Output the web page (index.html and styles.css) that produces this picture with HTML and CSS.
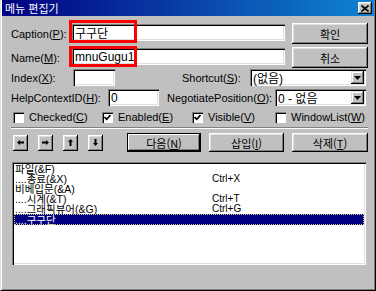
FILE: index.html
```html
<!DOCTYPE html>
<html lang="ko">
<head>
    <meta charset="UTF-8">
    <title>메뉴 편집기</title>
    <link rel="stylesheet" href="styles.css">
</head>
<body>
    <div class="window">
        <div class="titlebar">
            <span class="title">메뉴 편집기</span>
            <span class="close">
                <svg width="8" height="7" viewBox="0 0 8 7"><path d="M0.5 0.5 L7.5 6.5 M7.5 0.5 L0.5 6.5" stroke="#000" stroke-width="1.6"/></svg>
            </span>
        </div>
        <div class="body">
            <div class="row row-main">
                <span class="lbl lbl-caption">Caption(<u>P</u>):</span>
                <div class="field field-wide">
                    <span class="val">구구단</span>
                    <span class="mark mark-caption"></span>
                </div>
                <button class="btn btn-side">확인</button>
            </div>
            <div class="row row-main row-name">
                <span class="lbl lbl-caption">Name(<u>M</u>):</span>
                <div class="field field-wide">
                    <span class="val">mnuGugu1</span>
                    <span class="mark mark-name"></span>
                </div>
                <button class="btn btn-side">취소</button>
            </div>
            <div class="row row-small row-index">
                <span class="lbl lbl-index">Index(<u>X</u>):</span>
                <div class="field field-index"></div>
                <span class="lbl lbl-shortcut">Shortcut(<u>S</u>):</span>
                <div class="field combo combo-shortcut">
                    <span class="val">(없음)</span>
                    <span class="drop"><svg width="7" height="4" viewBox="0 0 7 4"><path d="M0 0 H7 L3.5 4 Z" fill="#000"/></svg></span>
                </div>
            </div>
            <div class="row row-small row-help">
                <span class="lbl lbl-help">HelpContextID(<u>H</u>):</span>
                <div class="field field-help"><span class="val">0</span></div>
                <span class="lbl lbl-neg">NegotiatePosition(<u>O</u>):</span>
                <div class="field combo combo-neg">
                    <span class="val">0 - 없음</span>
                    <span class="drop"><svg width="7" height="4" viewBox="0 0 7 4"><path d="M0 0 H7 L3.5 4 Z" fill="#000"/></svg></span>
                </div>
            </div>
            <div class="row row-checks">
                <label class="check check-1"><span class="box"></span>Checked(<u>C</u>)</label>
                <label class="check check-2"><span class="box"><svg width="7" height="7" viewBox="0 0 7 7"><path d="M0.5 3 L2.7 5.3 L6.5 1" fill="none" stroke="#000" stroke-width="1.7"/></svg></span>Enabled(<u>E</u>)</label>
                <label class="check check-3"><span class="box"><svg width="7" height="7" viewBox="0 0 7 7"><path d="M0.5 3 L2.7 5.3 L6.5 1" fill="none" stroke="#000" stroke-width="1.7"/></svg></span>Visible(<u>V</u>)</label>
                <label class="check"><span class="box"></span>WindowList(<u>W</u>)</label>
            </div>
            <div class="sep"></div>
            <div class="row row-tools">
                <div class="arrows">
                    <button class="btn arrow"><svg width="7" height="5" viewBox="0 0 7 5"><path d="M0 2.5 L3 0 V5 Z M3 1.5 H7 V3.5 H3 Z" fill="#000"/></svg></button>
                    <button class="btn arrow"><svg width="7" height="5" viewBox="0 0 7 5"><path d="M7 2.5 L4 0 V5 Z M0 1.5 H4 V3.5 H0 Z" fill="#000"/></svg></button>
                    <button class="btn arrow"><svg width="5" height="7" viewBox="0 0 5 7"><path d="M2.5 0 L0 3 H5 Z M1.5 3 H3.5 V7 H1.5 Z" fill="#000"/></svg></button>
                    <button class="btn arrow"><svg width="5" height="7" viewBox="0 0 5 7"><path d="M2.5 7 L0 4 H5 Z M1.5 0 H3.5 V4 H1.5 Z" fill="#000"/></svg></button>
                </div>
                <button class="btn btn-tool btn-default">다음(<u>N</u>)</button>
                <button class="btn btn-tool">삽입(<u>I</u>)</button>
                <button class="btn btn-tool btn-last">삭제(<u>T</u>)</button>
            </div>
            <div class="list">
                <div class="item"><span class="name">파일(&amp;F)</span></div>
                <div class="item"><span class="name">....종료(&amp;X)</span><span class="key">Ctrl+X</span></div>
                <div class="item"><span class="name">비베입문(&amp;A)</span></div>
                <div class="item"><span class="name">....시계(&amp;T)</span><span class="key">Ctrl+T</span></div>
                <div class="item"><span class="name">....그래픽뷰어(&amp;G)</span><span class="key">Ctrl+G</span></div>
                <div class="item selected"><span class="name">....구구단</span></div>
            </div>
        </div>
    </div>
</body>
</html>
```

FILE: styles.css
```css
* {
    box-sizing: border-box;
}
body {
    margin: 0;
    font-family: "Liberation Sans", "Noto Sans CJK KR", sans-serif;
    font-size: 11px;
    color: #000;
}
u {
    text-decoration: underline;
}

.window {
    width: 376px;
    height: 291px;
    background-color: #c0c0c0;
    border-left: 1px solid #dfdfdf;
    border-right: 1px solid #000;
    border-bottom: 1px solid #000;
    box-shadow: inset 1px 0 #fff, inset -1px -1px #808080;
    padding: 0 1px 1px 1px;
}

.titlebar {
    height: 16px;
    background: linear-gradient(to right, #000080, #1084d0);
    display: flex;
    align-items: center;
    justify-content: space-between;
    padding: 0 2px 0 3px;
    color: white;
}
.title {
    font-family: "Noto Sans CJK KR", sans-serif;
    font-size: 11px;
    line-height: 16px;
}
.close {
    width: 14px;
    height: 12px;
    background-color: #c0c0c0;
    box-shadow: inset -1px -1px #000, inset 1px 1px #fff, inset -2px -2px #808080, inset 2px 2px #dfdfdf;
    display: flex;
    align-items: center;
    justify-content: center;
}

.body {
    padding: 0 6px 0 9px;
}

.row {
    display: flex;
    align-items: center;
}
.row-main {
    margin-top: 7px;
    height: 21px;
    align-items: flex-start;
}
.row-name {
    margin-top: 3px;
}
.row-small {
    height: 17px;
}
.row-index {
    margin-top: 1px;
}
.row-help {
    margin-top: 3px;
}
.row-checks {
    margin-top: 3px;
    height: 16px;
}
.row-tools {
    margin-top: 4px;
    height: 19px;
}

.lbl {
    white-space: nowrap;
    flex: none;
}
.row-main .lbl {
    align-self: center;
}
.lbl-caption { width: 61px; }
.lbl-index { width: 62px; }
.lbl-shortcut { width: 68px; margin-left: 67px; }
.lbl-help { width: 97px; }
.lbl-neg { width: 108px; margin-left: 8px; }

.field {
    position: relative;
    height: 17px;
    background-color: white;
    box-shadow: inset 1px 1px #808080, inset 2px 2px #000, inset -1px -1px #fff, inset -2px -2px #dfdfdf;
    display: flex;
    align-items: center;
    padding: 0 3px;
    flex: none;
}
.val {
    font-size: 12px;
    white-space: nowrap;
}
.field-wide {
    width: 213px;
    margin-top: 1px;
    margin-right: 7px;
}
.field-index { width: 42px; }
.field-help { width: 51px; }
.combo {
    padding-right: 2px;
    justify-content: space-between;
}
.combo-shortcut { width: 116px; }
.combo-neg { width: 91px; }
.drop {
    width: 13px;
    height: 13px;
    background-color: #c0c0c0;
    box-shadow: inset -1px -1px #000, inset 1px 1px #dfdfdf, inset -2px -2px #808080, inset 2px 2px #fff;
    display: flex;
    align-items: center;
    justify-content: center;
}

/* red highlight boxes drawn over the text fields */
.mark {
    position: absolute;
    left: -3px;
    width: 68px;
    border: 3px solid #f00;
}
.mark-caption {
    top: -4px;
    height: 23px;
}
.mark-name {
    top: -2px;
    height: 21px;
}

.btn {
    font-family: "Noto Sans CJK KR", "Liberation Sans", sans-serif;
    font-size: 11px;
    background-color: #c0c0c0;
    border: none;
    margin: 0;
    padding: 0;
    color: #000;
    box-shadow: inset -1px -1px #000, inset 1px 1px #fff, inset -2px -2px #808080, inset 2px 2px #dfdfdf;
    display: flex;
    align-items: center;
    justify-content: center;
    flex: none;
}
.btn-side {
    width: 76px;
    height: 21px;
}

.check {
    display: flex;
    align-items: center;
    white-space: nowrap;
    flex: none;
}
.check-1 { width: 89px; margin-left: 2px; }
.check-2 { width: 90px; }
.check-3 { width: 83px; }
.box {
    width: 11px;
    height: 11px;
    margin-right: 5px;
    background-color: white;
    box-shadow: inset 1px 1px #808080, inset 2px 2px #000, inset -1px -1px #fff;
    display: flex;
    align-items: center;
    justify-content: center;
}

.sep {
    margin-top: 2px;
    height: 2px;
    border-top: 1px solid #808080;
    border-bottom: 1px solid #fff;
}

.arrows {
    display: flex;
    gap: 10px;
    margin-left: 2px;
    width: 116px;
}
.arrow {
    width: 15px;
    height: 16px;
}
.btn-tool {
    width: 75px;
    height: 19px;
    margin-right: 8px;
}
.btn-default {
    box-shadow: inset 0 0 0 1px #000, inset -2px -2px #000, inset 2px 2px #fff, inset -3px -3px #808080;
    width: 74px;
}
.btn-last {
    width: 76px;
    margin-right: 0;
}

.list {
    margin-top: 10px;
    margin-left: 1px;
    width: 354px;
    height: 103px;
    background-color: white;
    box-shadow: inset 1px 1px #808080, inset 2px 2px #000, inset -1px -1px #fff, inset -2px -2px #dfdfdf;
    padding: 2px 2px 0 2px;
}
.item {
    display: flex;
    align-items: center;
    height: 10px;
    line-height: 10px;
    font-size: 10.5px;
    white-space: nowrap;
    padding-left: 1px;
}
.item .name {
    width: 197px;
}
.item .key {
    font-size: 10px;
}
.item.selected {
    background-color: #000080;
    color: white;
    height: 11px;
    outline: 1px dotted #d0d080;
    outline-offset: -1px;
}
```
